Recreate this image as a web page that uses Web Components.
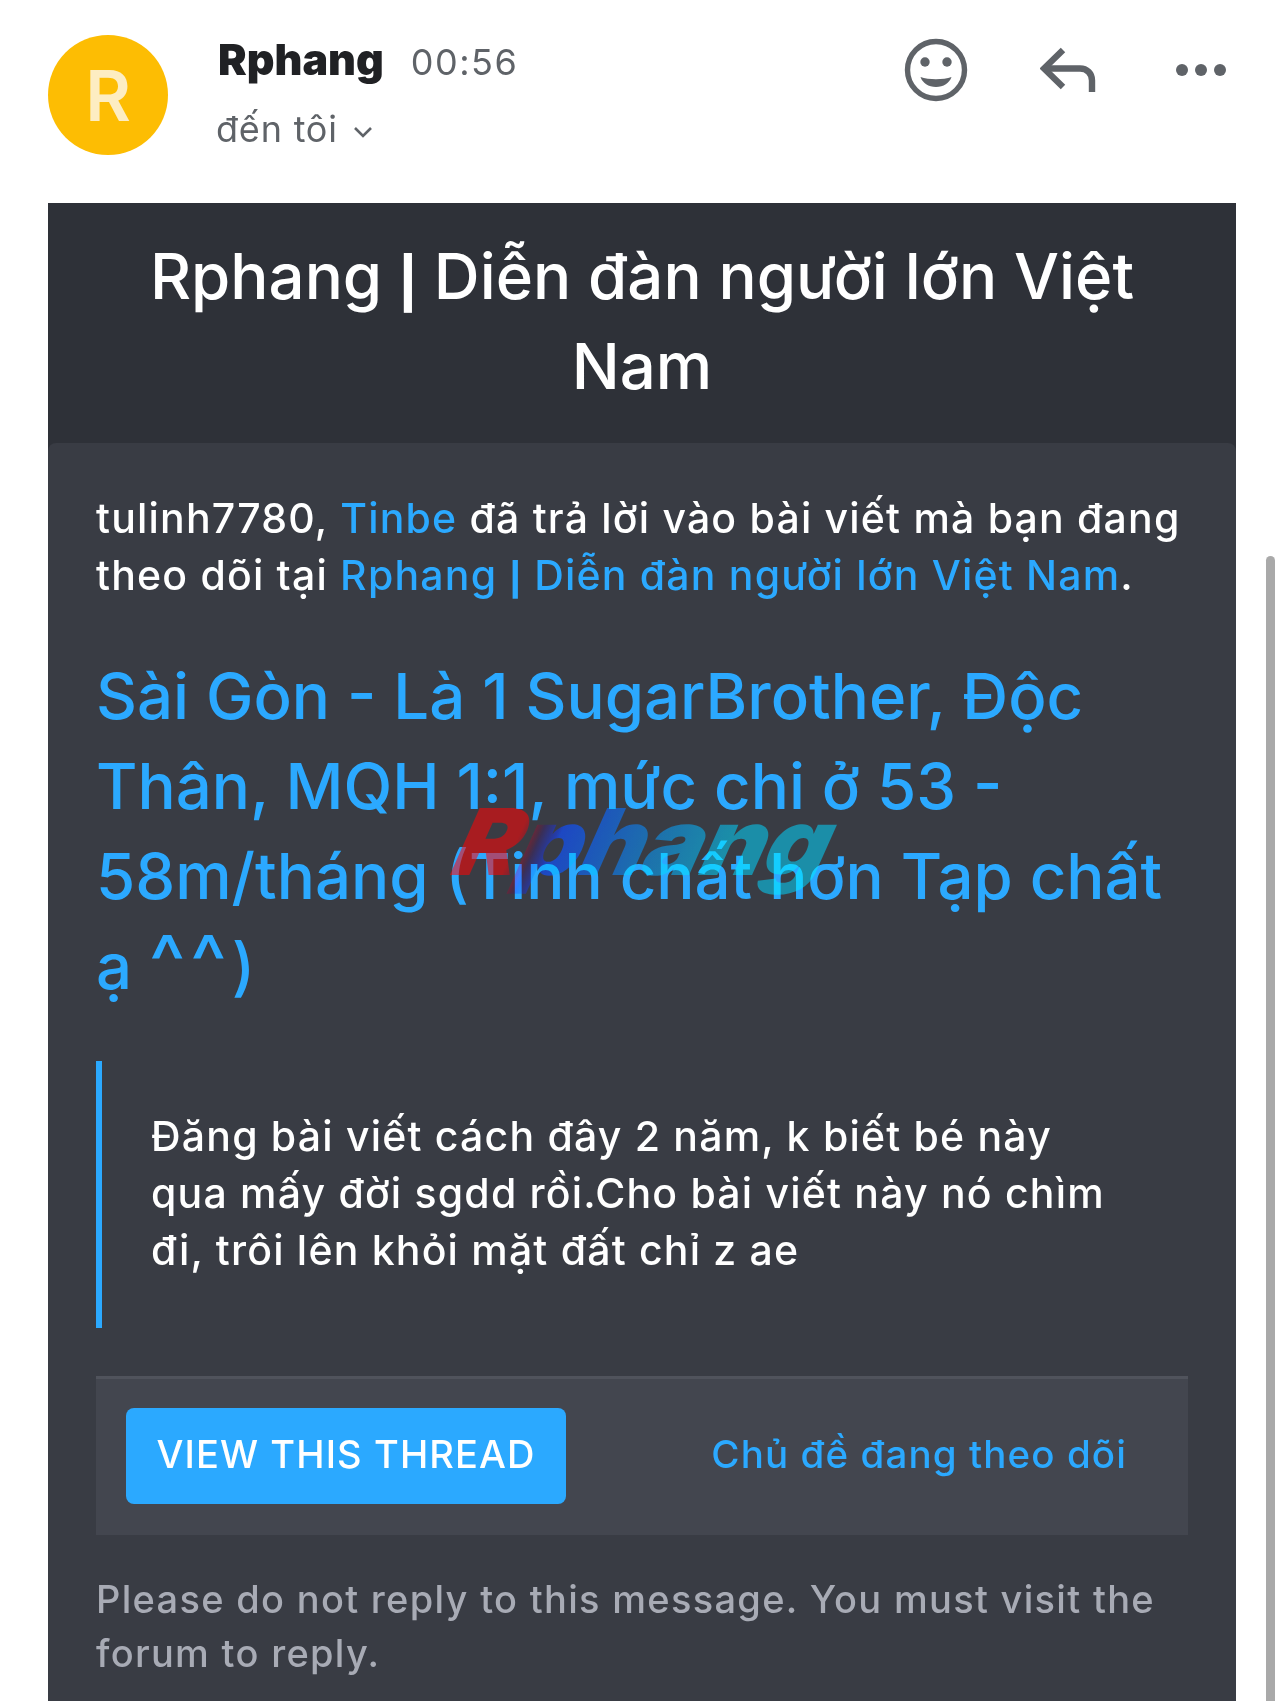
<!DOCTYPE html>
<html lang="vi">
<head>
<meta charset="utf-8">
<title>Rphang</title>
<style>
  html, body { margin: 0; height: 1701px; overflow: hidden; background: #fff; }
  body { font-family: Inter, "Noto Sans", sans-serif; }
  .pipe { font-family: "Liberation Sans", sans-serif; font-weight: 700; line-height: 1; }
  .caret { font-size: 1.2em; letter-spacing: 5px; line-height: 1; }
</style>
</head>
<body>
<mail-screen>
  <mail-header name="Rphang" time="00:56" to="đến tôi"></mail-header>
  <forum-mail>
    <span slot="title">Rphang <span class="pipe">|</span> Diễn đàn người lớn Việt Nam</span>
    <p-text>tulinh7780, <a-link>Tinbe</a-link> đã trả lời vào bài viết mà bạn đang theo dõi tại <a-link>Rphang <span class="pipe">|</span> Diễn đàn người lớn Việt Nam</a-link>.</p-text>
    <thread-title>Sài Gòn - Là 1 SugarBrother, Độc Thân, MQH 1:1, mức chi ở 53 - 58m/tháng (Tinh chất hơn Tạp chất ạ <span class="caret">^^</span>)</thread-title>
    <quote-box>Đăng bài viết cách đây 2 năm, k biết bé này qua mấy đời sgdd rồi.Cho bài viết này nó chìm đi, trôi lên khỏi mặt đất chỉ z ae</quote-box>
    <action-row button="View this thread" link="Chủ đề đang theo dõi"></action-row>
    <foot-note>Please do not reply to this message. You must visit the forum to reply.</foot-note>
  </forum-mail>
  <water-mark>Rphang</water-mark>
  <scroll-thumb></scroll-thumb>
</mail-screen>

<script>
// small helper so each class only has to give its html
function shadow(el, html) {
  el.attachShadow({ mode: 'open' });
  el.shadowRoot.innerHTML = html;
}

class MailScreen extends HTMLElement {
  constructor() {
    super();
    shadow(this, `<style>
      :host { display: block; position: relative; height: 1701px; overflow: hidden; background: #fff; }
    </style><slot></slot>`);
  }
}

class MailHeader extends HTMLElement {
  connectedCallback() {
    const name = this.getAttribute('name');
    const time = this.getAttribute('time');
    const to = this.getAttribute('to');
    shadow(this, `<style>
      :host { display: flex; align-items: flex-start; height: 168px; padding: 35px 57px 0 48px; }
      .avatar { width: 120px; height: 120px; border-radius: 50%; background: #fdbd03; color: #fdedc2;
        display: flex; align-items: center; justify-content: center; font-size: 70px; font-weight: 600; flex: none; }
      .info { margin-left: 50px; flex: 1; }
      .top { display: flex; align-items: baseline; height: 50px; margin-top: -2px; }
      .name { font-size: 43px; font-weight: 900; color: #202124; }
      .time { font-size: 36px; color: #5f6368; margin-left: 27px; letter-spacing: 1.5px; }
      .to { display: flex; align-items: center; margin-top: 21px; margin-left: -2px; font-size: 36px; color: #5f6368; letter-spacing: .8px; height: 50px; }
      .to svg { margin-left: 15px; margin-top: 6px; }
      .icons { display: flex; align-items: center; height: 70px; }
      .icons svg { display: block; }
    </style>
    <div class="avatar">R</div>
    <div class="info">
      <div class="top"><span class="name">${name}</span><span class="time">${time}</span></div>
      <div class="to"><span>${to}</span>
        <svg width="20" height="12" viewBox="0 0 20 12" fill="none" stroke="#5f6368" stroke-width="2.6"><path d="M2 2l8 8 8-8"/></svg>
      </div>
    </div>
    <div class="icons">
      <svg width="64" height="64" viewBox="0 0 64 64">
        <circle cx="32" cy="32" r="28.5" fill="none" stroke="#5f6368" stroke-width="5.4"/>
        <circle cx="21" cy="24" r="4.700" fill="#5f6368"/>
        <circle cx="43" cy="24" r="4.700" fill="#5f6368"/>
        <path d="M16.500 39c4 1.500 10 2.200 15.500 2.200s11.500-.7 15.500-2.200c-2 6-8 10-15.500 10s-13.500-4-15.500-10z" fill="#5f6368"/>
      </svg>
      <svg style="margin-left:72px" width="58" height="46" viewBox="0 0 58 46" fill="none" stroke="#5f6368" stroke-width="6.400">
        <path d="M23 3L4 21.500 23 40"/><path d="M4 21.500H40c7 0 12 5 12 12V45"/>
      </svg>
      <svg style="margin-left:77px" width="52" height="16" viewBox="0 0 52 16" fill="#5f6368">
        <circle cx="7" cy="8" r="6"/><circle cx="26" cy="8" r="6"/><circle cx="45" cy="8" r="6"/>
      </svg>
    </div>`);
  }
}

class ForumMail extends HTMLElement {
  constructor() {
    super();
    shadow(this, `<style>
      :host { display: block; margin: 0 48px; background: #2e3138; height: 1498px; }
      .head { color: #fff; text-align: center; font-size: 63.500px; font-weight: 500; line-height: 90px; padding: 28px 60px 32px; }
      .card { background: #393c44; border-radius: 8px 8px 0 0; padding: 47px 48px 0 48px; color: #fff; height: 100%; box-sizing: border-box; }
    </style>
    <div class="head"><slot name="title"></slot></div>
    <div class="card"><slot></slot></div>`);
  }
}

class PText extends HTMLElement {
  constructor() {
    super();
    shadow(this, `<style>
      :host { display: block; font-size: 41px; font-weight: 500; line-height: 57px; letter-spacing: 1.2px; }
    </style><slot></slot>`);
  }
}

class ALink extends HTMLElement {
  constructor() {
    super();
    shadow(this, `<style>:host { display: inline; color: #2ba9ff; }</style><slot></slot>`);
  }
}

class ThreadTitle extends HTMLElement {
  constructor() {
    super();
    shadow(this, `<style>
      :host { display: block; margin-top: 47px; color: #2ba9ff; font-size: 63.500px; font-weight: 500; line-height: 90px; }
    </style><slot></slot>`);
  }
}

class QuoteBox extends HTMLElement {
  constructor() {
    super();
    shadow(this, `<style>
      :host { display: block; margin-top: 50px; border-left: 6px solid #2ba9ff; padding: 47px 82px 49px 49px;
        font-size: 41px; font-weight: 500; line-height: 57px; letter-spacing: 1.2px; }
    </style><slot></slot>`);
  }
}

class ActionRow extends HTMLElement {
  connectedCallback() {
    shadow(this, `<style>
      :host { display: flex; align-items: center; justify-content: space-between; margin-top: 48px; height: 156px;
        background: #43464f; border-top: 3px solid #50535c; padding: 0 61px 0 30px; }
      .btn { background: #2ba9ff; color: #fff; border-radius: 8px; height: 96px; width: 440px; display: flex; margin-bottom: 2px;
        align-items: center; justify-content: center; padding-bottom: 4px; box-sizing: border-box; font-size: 38px; font-weight: 500; letter-spacing: 1.1px;
        text-transform: uppercase; }
      .lnk { color: #2ba9ff; font-size: 38.500px; font-weight: 500; letter-spacing: 1.1px; margin-bottom: 6px; }
    </style>
    <div class="btn">${this.getAttribute('button')}</div>
    <div class="lnk">${this.getAttribute('link')}</div>`);
  }
}

class FootNote extends HTMLElement {
  constructor() {
    super();
    shadow(this, `<style>
      :host { display: block; margin-top: 37px; color: #a8abb5; font-size: 38px; font-weight: 500; line-height: 54px; letter-spacing: 1.3px; }
    </style><slot></slot>`);
  }
}

// watermark sits over the text, so absolute. hard-light lets the blue text shine through
class WaterMark extends HTMLElement {
  constructor() {
    super();
    shadow(this, `<style>
      :host { position: absolute; left: 440px; top: 787px; display: block; width: 400px; height: 110px; pointer-events: none; mix-blend-mode: hard-light; }
      span { display: inline-block; font-family: Inter, sans-serif; font-weight: 900; font-size: 92px; line-height: 110px;
        letter-spacing: -1px; transform-origin: 0 50%; transform: translateX(20px) skewX(-24deg) scaleX(1.07);
        background: linear-gradient(90deg, #c73b3b 0 15%, #4087d6 26%, #40a0c7 50%, #3bb5c4 72%, #3bb5c4 100%);
        -webkit-background-clip: text; background-clip: text; color: transparent; }
    </style><span><slot></slot></span>`);
  }
}

class ScrollThumb extends HTMLElement {
  constructor() {
    super();
    shadow(this, `<style>
      :host { position: absolute; left: 1266px; top: 556px; width: 9px; bottom: -10px; display: block;
        background: #a9a9a9; border-radius: 5px; }
    </style>`);
  }
}

customElements.define('mail-screen', MailScreen);
customElements.define('mail-header', MailHeader);
customElements.define('forum-mail', ForumMail);
customElements.define('p-text', PText);
customElements.define('a-link', ALink);
customElements.define('thread-title', ThreadTitle);
customElements.define('quote-box', QuoteBox);
customElements.define('action-row', ActionRow);
customElements.define('foot-note', FootNote);
customElements.define('water-mark', WaterMark);
customElements.define('scroll-thumb', ScrollThumb);
</script>
</body>
</html>
